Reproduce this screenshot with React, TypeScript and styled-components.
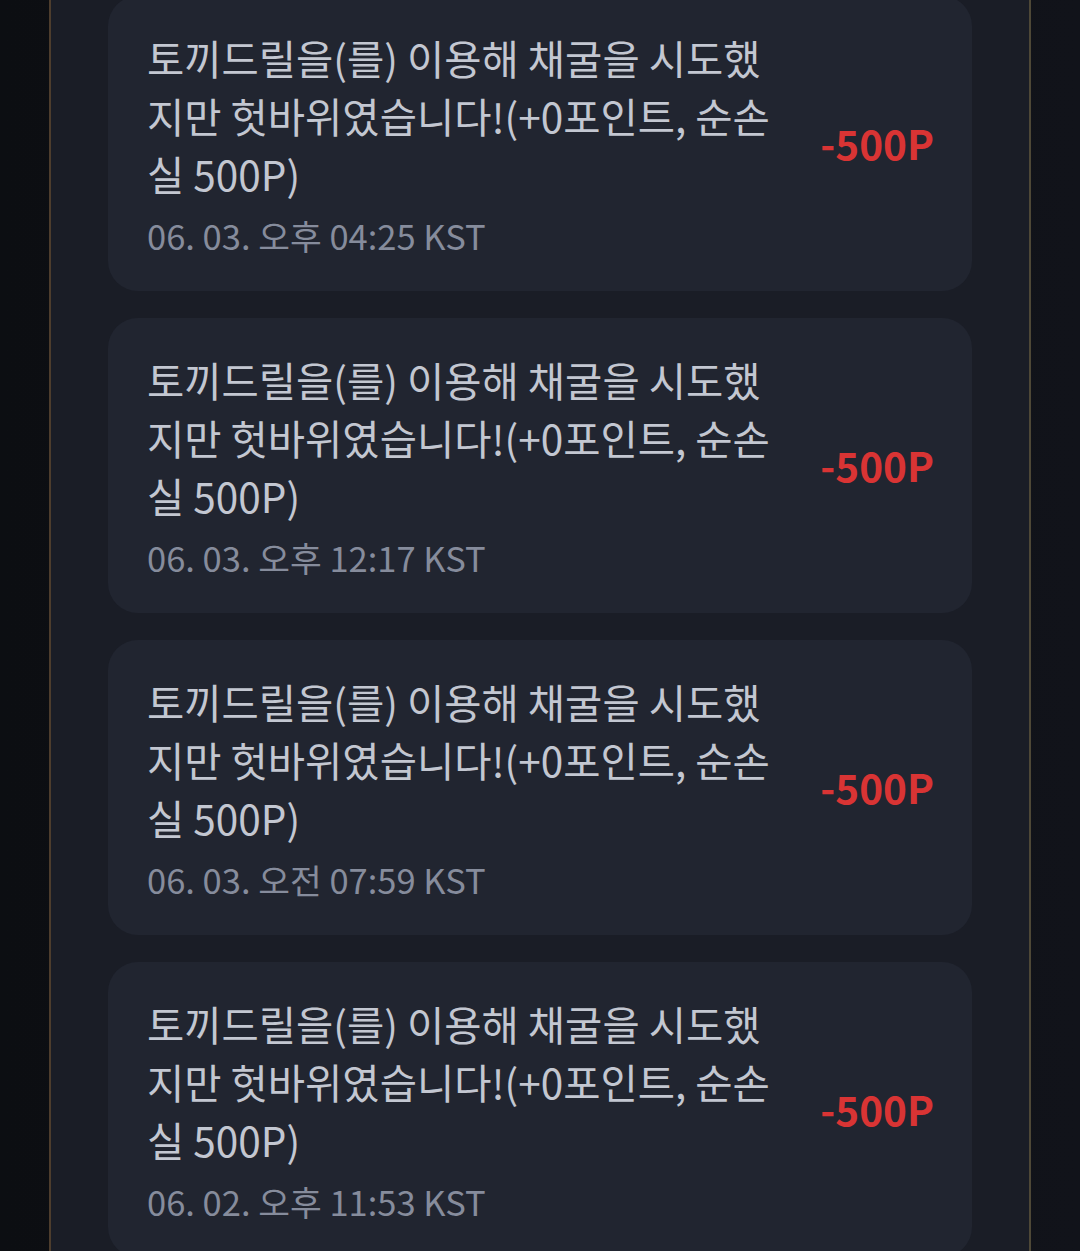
import styled, { createGlobalStyle } from 'styled-components'

const GlobalStyle = createGlobalStyle`
   html, body {
      margin: 0;
      padding: 0;
      background: #0d0f13;
      font-family: 'Noto Sans CJK KR', 'Noto Sans', sans-serif;
   }
`

const Page = styled.div`
   height: 1251px;
   overflow: hidden;
   display: flex;
   justify-content: center;
   background: linear-gradient(90deg, #0c0e12 0%, #11131a 100%);
`

const Panel = styled.main`
   width: 982px;
   flex-shrink: 0;
   background: #1a1d26;
   border-left: 2px solid #4d3d2d;
   border-right: 2px solid #4e4837;
   padding: 0 57px;
   box-sizing: border-box;
`

const List = styled.ul`
   list-style: none;
   margin: -4px 0 0;
   padding: 0;
   display: flex;
   flex-direction: column;
   gap: 27px;
`

const Card = styled.li`
   background: #212530;
   border-radius: 30px;
   padding: 33px 38px 30px 39px;
   display: flex;
   align-items: center;
`

const Body = styled.div`
   flex: 0 1 636px;
   min-width: 0;
`

const Message = styled.p`
   margin: 0;
   font-size: 40.5px;
   line-height: 58px;
   color: #c3c7d1;
`

const Time = styled.div`
   margin-top: 6px;
   font-size: 34.5px;
   line-height: 52px;
   color: #868c9c;
`

const Amount = styled.div<{ $negative?: boolean }>`
   flex-shrink: 0;
   margin-left: auto;
   margin-bottom: 5px;
   font-size: 40.5px;
   font-weight: 700;
   color: ${p => (p.$negative ? '#d93434' : '#3cc47a')};
`

const logs = [
   { time: '06. 03. 오후 04:25 KST', amount: -500 },
   { time: '06. 03. 오후 12:17 KST', amount: -500 },
   { time: '06. 03. 오전 07:59 KST', amount: -500 },
   { time: '06. 02. 오후 11:53 KST', amount: -500 },
]

const App = () => {
   return (
      <>
         <GlobalStyle />
         <Page>
            <Panel>
               <List>
                  {logs.map((log, i) => (
                     <Card key={i}>
                        <Body>
                           <Message>
                              토끼드릴을(를) 이용해 채굴을 시도했지만 헛바위였습니다!(+0포인트, 순손실 500P)
                           </Message>
                           <Time>{log.time}</Time>
                        </Body>
                        <Amount $negative={log.amount < 0}>
                           {log.amount < 0 ? '-' : '+'}
                           {Math.abs(log.amount)}P
                        </Amount>
                     </Card>
                  ))}
               </List>
            </Panel>
         </Page>
      </>
   )
}

export default App
